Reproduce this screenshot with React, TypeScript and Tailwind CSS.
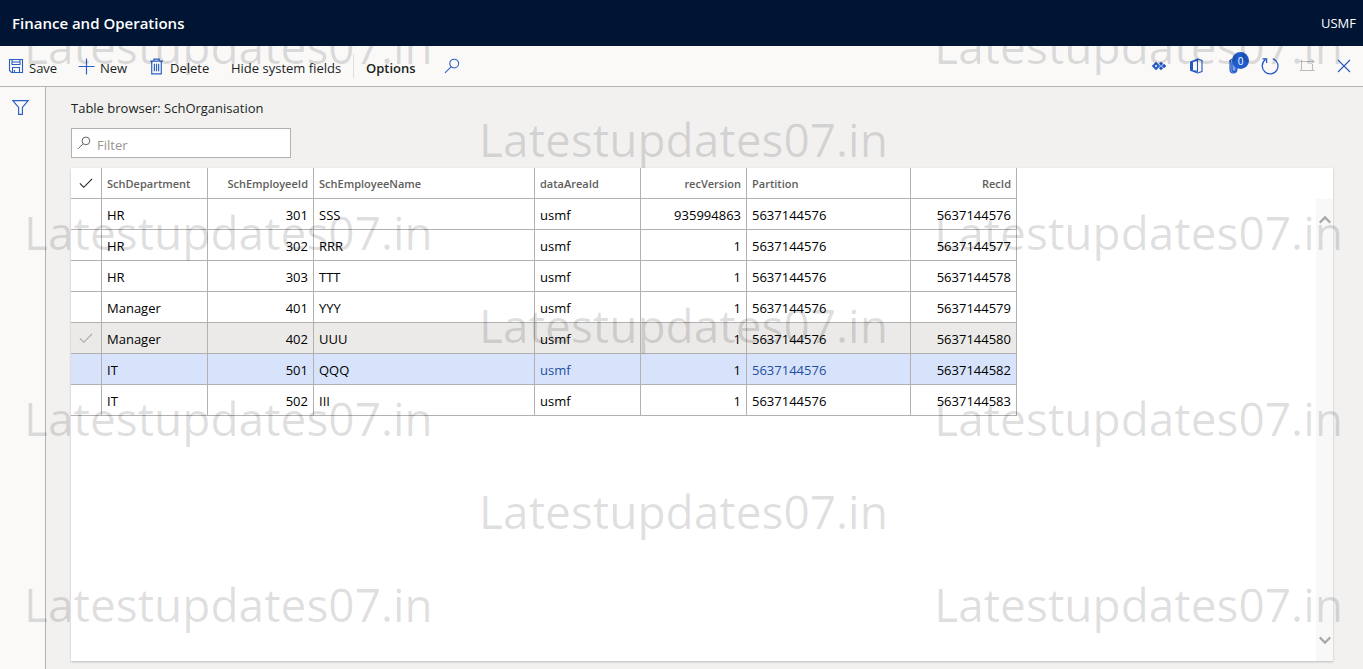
import type { ReactNode } from "react";
import clsx from "clsx";

const columns = [
  { key: "department", title: "SchDepartment", width: "w-[106px]", right: false },
  { key: "employeeId", title: "SchEmployeeId", width: "w-[106px]", right: true },
  { key: "employeeName", title: "SchEmployeeName", width: "w-[221px]", right: false },
  { key: "dataAreaId", title: "dataAreaId", width: "w-[106px]", right: false },
  { key: "recVersion", title: "recVersion", width: "w-[106px]", right: true },
  { key: "partition", title: "Partition", width: "w-[164px]", right: false },
  { key: "recId", title: "RecId", width: "w-[106px]", right: true },
];

type Row = {
  values: string[];
  state?: "hover" | "selected";
};

const rows: Row[] = [
  { values: ["HR", "301", "SSS", "usmf", "935994863", "5637144576", "5637144576"] },
  { values: ["HR", "302", "RRR", "usmf", "1", "5637144576", "5637144577"] },
  { values: ["HR", "303", "TTT", "usmf", "1", "5637144576", "5637144578"] },
  { values: ["Manager", "401", "YYY", "usmf", "1", "5637144576", "5637144579"] },
  { values: ["Manager", "402", "UUU", "usmf", "1", "5637144576", "5637144580"], state: "hover" },
  { values: ["IT", "501", "QQQ", "usmf", "1", "5637144576", "5637144582"], state: "selected" },
  { values: ["IT", "502", "III", "usmf", "1", "5637144576", "5637144583"] },
];

function Icon({ children, className, size = 16 }: { children: ReactNode; className?: string; size?: number }) {
  return (
    <svg
      viewBox="0 0 16 16"
      width={size}
      height={size}
      fill="none"
      stroke="currentColor"
      strokeWidth="1.1"
      className={clsx("shrink-0", className)}
      aria-hidden="true"
    >
      {children}
    </svg>
  );
}

const SearchPath = () => (
  <>
    <circle cx="10.2" cy="5.6" r="4.4" />
    <path d="M7 8.8 1 14.8" />
  </>
);

const CheckIcon = () => (
  <Icon size={14}>
    <path d="M1 8.5 5.4 13 15 3.4" strokeWidth="1.2" />
  </Icon>
);

function Watermark() {
  const mark = <span>Latestupdates07.in</span>;
  return (
    <div
      aria-hidden="true"
      className="pointer-events-none absolute inset-0 z-10 overflow-hidden pr-5 pl-6 text-[46px] leading-[93px] text-black/13"
    >
      {[0, 1, 2, 3, 4, 5, 6].map((i) => (
        <div key={i} className={clsx("flex h-[93px]", i % 2 === 0 ? "justify-between" : "justify-center")}>
          {mark}
          {i % 2 === 0 && mark}
        </div>
      ))}
    </div>
  );
}

function ActionBar() {
  return (
    <div className="flex h-[41px] items-center justify-between border-b border-[#b5b3b1] bg-[#faf9f8] pr-px pl-2">
      <div className="flex items-center">
        <button className="flex w-[70px] items-center gap-[5px]">
          <Icon className="text-[#2b5fc4]">
            <path d="M1.5 1.5h13v13h-11l-2-2z" />
            <path d="M4 1.5v5h8v-5M4.5 14.5v-5h7v5M6.5 12v2.5M4 4h8" />
          </Icon>
          <span className="pt-1">Save</span>
        </button>
        <button className="flex w-[70px] items-center gap-[5px]">
          <Icon className="text-[#2b5fc4]" size={17}>
            <path d="M8 .5v15M.5 8h15" />
          </Icon>
          <span className="pt-1">New</span>
        </button>
        <button className="flex w-[83px] items-center gap-[5px]">
          <Icon className="text-[#2b5fc4]" size={17}>
            <path d="M2 3h12M5.5 3V1h5v2M3.5 3v12h9V3M6 5.5v7M8 5.5v7M10 5.5v7" />
          </Icon>
          <span className="pt-1">Delete</span>
        </button>
        <button className="w-[123px] border-r border-[#e1dfdd] pt-1 text-left">Hide system fields</button>
        <button className="w-[79px] pt-1 pl-3 text-left font-semibold">Options</button>
        <button aria-label="Search" className="pl-[11px] text-[#2b5fc4]">
          <Icon>
            <SearchPath />
          </Icon>
        </button>
      </div>
      <div className="flex items-center text-[#2358c5]">
        <button aria-label="Connectors" className="flex w-[37px] justify-center">
          <Icon>
            <path d="M5 5.2 7.8 8 5 10.8 2.2 8z" strokeWidth="2" />
            <path
              d="m10 3.7 2.1 2.1L10 7.9 7.9 5.8zM10 8.1l2.1 2.1-2.1 2.1-2.1-2.1zM13 5.7 15.3 8 13 10.3 10.7 8z"
              fill="currentColor"
              stroke="none"
            />
          </Icon>
        </button>
        <button aria-label="Open in Office" className="flex w-[37px] justify-center">
          <Icon>
            <path d="M2 3.5 9.5.5V3L5 4v8l-3 1z" fill="currentColor" stroke="none" />
            <path d="M9.5 1 14 2.5v11L9.5 15 3 12.5l6.5.8zV14" />
          </Icon>
        </button>
        <button aria-label="Attachments" className="relative flex w-[37px] justify-center">
          <Icon>
            <path d="M5 2v9.5a3.5 3.5 0 0 0 7 0V4" fill="#7ea3ea" />
            <path d="M5 4a3 3 0 0 1 6 0v7.5a2 2 0 0 1-4 0V5" />
          </Icon>
          <span className="absolute -top-1.5 left-[18px] flex size-[17px] items-center justify-center rounded-full bg-[#1f5bcb] text-[10px] text-white">
            0
          </span>
        </button>
        <button aria-label="Refresh" className="flex w-[37px] justify-center">
          <Icon size={18}>
            <path d="M10.5 1.4A7 7 0 1 1 4 2.3M1.3 1.7H5v3.7" />
          </Icon>
        </button>
        <button aria-label="Open in new window" disabled className="flex w-[37px] justify-center text-[#bdbbb9]">
          <Icon>
            <path d="M11 3.5H2.5v9h11V6M12 1.5l3 2-3 2M15 3.5h-4M.5 3.5h2v-2M.5 12.5h2M13.5 12.5h2" />
          </Icon>
        </button>
        <button aria-label="Close" className="flex w-[37px] justify-center">
          <Icon>
            <path d="m2 2 12 12M14 2 2 14" />
          </Icon>
        </button>
      </div>
    </div>
  );
}

function DataGrid() {
  return (
    <table className="w-[946px] table-fixed border-separate border-spacing-0">
      <thead>
        <tr className="h-[31px] text-[11px] text-[#605e5c]">
          <th className="w-[31px] border-r border-b border-[#b3b1af] p-0 text-[#201f1e]">
            <span className="flex justify-center">
              <CheckIcon />
            </span>
          </th>
          {columns.map((col) => (
            <th
              key={col.key}
              className={clsx(
                "border-r border-b border-[#b3b1af] px-[5px] pt-0.5 pb-0 font-semibold",
                col.width,
                col.right ? "text-right" : "text-left",
              )}
            >
              {col.title}
            </th>
          ))}
        </tr>
      </thead>
      <tbody>
        {rows.map((row) => (
          <tr
            key={row.values[6]}
            className={clsx(
              "h-[31px]",
              row.state === "hover" && "bg-[#ebeae8]",
              row.state === "selected" && "bg-[#d7e3fa]",
            )}
          >
            <td className="border-r border-b border-[#b3b1af] p-0 text-[#a6a4a2]">
              {row.state === "hover" && (
                <span className="flex justify-center">
                  <CheckIcon />
                </span>
              )}
            </td>
            {columns.map((col, i) => (
              <td
                key={col.key}
                className={clsx(
                  "border-r border-b border-[#b3b1af] px-[5px] pt-0.5 pb-0",
                  col.right && "text-right",
                  row.state === "selected" && (i === 3 || i === 5) ? "text-[#1f4fa3]" : "text-black",
                )}
              >
                {row.values[i]}
              </td>
            ))}
          </tr>
        ))}
      </tbody>
    </table>
  );
}

export default function App() {
  return (
    <div className="relative flex min-h-screen flex-col overflow-hidden bg-[#f2f1f0] font-['Open_Sans','Noto_Sans',sans-serif] text-[13px] leading-5 text-[#201f1e]">
      <header className="relative z-20 flex h-[46px] items-center justify-between bg-[#001433] pr-[7px] pl-3 text-white">
        <h1 className="text-[15px] font-semibold">Finance and Operations</h1>
        <span>USMF</span>
      </header>
      <ActionBar />
      <div className="flex flex-1">
        <aside className="w-[46px] border-r border-[#b5b3b1] bg-[#faf9f8] pt-3 pl-3">
          <button aria-label="Show filters" className="block text-[#2b5fc4]">
            <Icon size={17}>
              <path d="M.8 1.5h14.4L9.8 8v6.5H6.2V8z" />
            </Icon>
          </button>
        </aside>
        <main className="flex flex-1 flex-col pt-[11px] pr-[30px] pb-2 pl-[25px]">
          <h2>Table browser: SchOrganisation</h2>
          <label className="mt-2.5 mb-2.5 flex h-[30px] w-[220px] items-center gap-1.5 border border-[#b3b1af] bg-white pl-[5px] text-[#605e5c]">
            <Icon size={14}>
              <SearchPath />
            </Icon>
            <input
              type="text"
              aria-label="Filter"
              placeholder="Filter"
              className="min-w-0 flex-1 bg-transparent pt-1 outline-none placeholder:text-[#979593]"
            />
          </label>
          <section className="flex flex-1 justify-between bg-white shadow-[0_1px_2px_#bbb9b7]">
            <div>
              <DataGrid />
            </div>
            <div className="mt-[31px] flex w-[17px] flex-col items-center justify-between bg-[#f8f8f8] py-3.5 text-[#a9a9a9]">
              <Icon size={14}>
                <path d="m2 11 6-6 6 6" strokeWidth="2.5" />
              </Icon>
              <Icon size={14}>
                <path d="m2 5 6 6 6-6" strokeWidth="2.5" />
              </Icon>
            </div>
          </section>
        </main>
      </div>
      <Watermark />
    </div>
  );
}
